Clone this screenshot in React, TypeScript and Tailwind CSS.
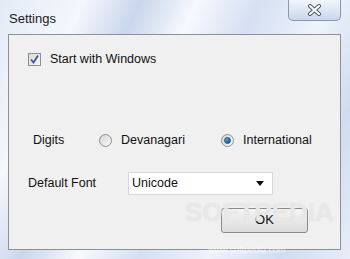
import React from "react"

const font = { fontFamily: "'Liberation Sans', Arial, sans-serif" }

function CheckBox() {
  return (
    <div className="w-[13px] h-[13px] border border-[#8f8f8f] bg-gradient-to-br from-[#dcdcdc] to-[#f6f6f6] flex items-center justify-center">
      <svg width="11" height="11" viewBox="0 0 11 11">
        <path d="M2 5.5 L4.5 8.5 L9 1.5" fill="none" stroke="#3c55a8" strokeWidth="1.8" />
      </svg>
    </div>
  )
}

function Radio({ checked }: { checked?: boolean }) {
  return (
    <div className="w-[13px] h-[13px] rounded-full border border-[#8f8f8f] bg-gradient-to-br from-[#d4d4d4] to-[#fbfbfb] flex items-center justify-center">
      {checked && (
        <div className="w-[7px] h-[7px] rounded-full bg-gradient-to-br from-[#5fb8f0] to-[#0d4d8a] border border-[#1b4f7e]" />
      )}
    </div>
  )
}

export default function App() {
  return (
    <div
      className="w-[350px] h-[259px] relative overflow-hidden flex flex-col bg-[linear-gradient(115deg,#e3ebf7_0%,#f4f7fc_18%,#c9d6ec_30%,#f7f9fd_42%,#d5e0f2_55%,#eef3fb_70%,#cfdcf0_85%,#e8eef8_100%)]"
      style={font}
    >
      {/* title bar */}
      <div className="h-[34px] flex items-start shrink-0">
        <span className="ml-[9px] mt-[9px] text-[13px] text-[#1a1a1a]">Settings</span>
        <div className="ml-auto mr-[9px] w-[53px] h-[21px] border border-t-0 border-[#8a97ab] rounded-b-[5px] bg-gradient-to-b from-[#f2f6fc] to-[#c9d7ec] flex items-center justify-center">
          <svg width="15" height="12" viewBox="0 0 15 12">
            <path d="M3 2 L12 10 M12 2 L3 10" stroke="#4a5261" strokeWidth="4" strokeLinecap="round" />
            <path d="M3 2 L12 10 M12 2 L3 10" stroke="#ffffff" strokeWidth="2.2" strokeLinecap="round" />
          </svg>
        </div>
      </div>

      {/* client area */}
      <div className="mx-[8px] mr-[9px] mb-[9px] flex-1 border border-[#8d9096] bg-[#f0f0f0] relative text-[12.5px] text-[#111]">
        <div className="flex items-center gap-[9px] ml-[19px] mt-[15px]">
          <CheckBox />
          <span>Start with Windows</span>
        </div>

        <div className="flex items-center ml-[24px] mt-[62px]">
          <span className="w-[66px]">Digits</span>
          <Radio />
          <span className="ml-[9px] w-[100px]">Devanagari</span>
          <Radio checked />
          <span className="ml-[9px]">International</span>
        </div>

        <div className="flex items-center ml-[19px] mt-[22px]">
          <span className="w-[100px]">Default Font</span>
          <div className="w-[145px] h-[23px] bg-white border border-[#d8d8d8] flex items-center pl-[3px] pr-[8px]">
            <span className="flex-1">Unicode</span>
            <svg width="8" height="5" viewBox="0 0 8 5">
              <path d="M0 0 L8 0 L4 5 Z" fill="#111" />
            </svg>
          </div>
        </div>

        <div className="flex justify-end mr-[32px] mt-[13px]">
          <div className="w-[87px] h-[25px] border border-[#8a8a8a] rounded-[3px] bg-gradient-to-b from-[#f4f4f4] to-[#dcdcdc] flex items-center justify-center text-[13px]">
            OK
          </div>
        </div>

        {/* watermark */}
        <div className="absolute left-[176px] top-[164px] text-[26px] font-bold text-white/50 [text-shadow:0_0_1px_#d0d0d0] pointer-events-none leading-none">
          SOFTPEDIA
        </div>
      </div>
      <div className="absolute left-[208px] top-[246px] text-[9px] leading-none text-white/70 pointer-events-none">
        www.softpedia.com
      </div>
    </div>
  )
}
